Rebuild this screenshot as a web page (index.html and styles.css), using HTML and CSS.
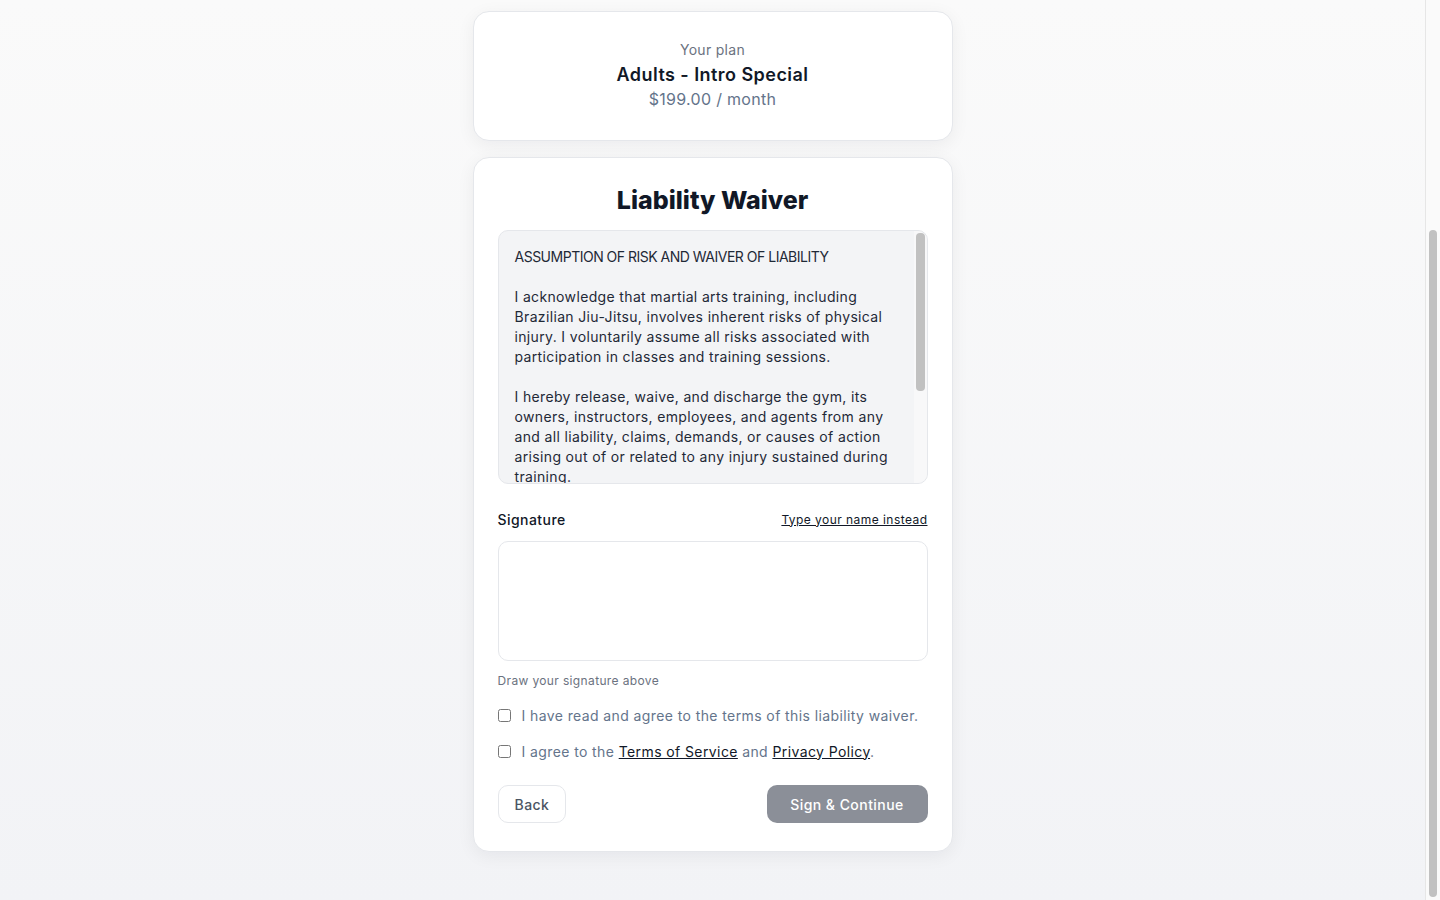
FILE: index.html
```html
<!DOCTYPE html>
<html lang="en">
<head>
    <meta charset="UTF-8">
    <meta name="viewport" content="width=device-width, initial-scale=1.0">
    <title>Liability Waiver</title>
    <link rel="stylesheet" href="styles.css">
</head>
<body>

<div class="page">
    <main class="checkout">
        <section class="card plan-card">
            <p class="plan-label">Your plan</p>
            <p class="plan-name">Adults - Intro Special</p>
            <p class="plan-price">$199.00 / month</p>
        </section>

        <section class="card waiver-card">
            <h1>Liability Waiver</h1>

            <div class="waiver-box">
                <div class="waiver-text"><span class="waiver-caps">ASSUMPTION OF RISK AND WAIVER OF LIABILITY</span>

I acknowledge that martial arts training, including Brazilian Jiu-Jitsu, involves inherent risks of physical injury. I voluntarily assume all risks associated with participation in classes and training sessions.

I hereby release, waive, and discharge the gym, its owners, instructors, employees, and agents from any and all liability, claims, demands, or causes of action arising out of or related to any injury sustained during training.

I certify that I am in good physical health and have no medical condition that would prevent my safe participation.</div>
                <div class="box-scroll"><div class="box-thumb"></div></div>
            </div>

            <div class="sig-head">
                <span class="sig-label">Signature</span>
                <a href="#" class="sig-switch">Type your name instead</a>
            </div>
            <div class="sig-pad"></div>
            <p class="hint">Draw your signature above</p>

            <label class="check">
                <input type="checkbox">
                <span>I have read and agree to the terms of this liability waiver.</span>
            </label>
            <label class="check">
                <input type="checkbox">
                <span>I agree to the <a href="#">Terms of Service</a> and <a href="#">Privacy Policy</a>.</span>
            </label>

            <div class="actions">
                <button class="btn btn-back">Back</button>
                <button class="btn btn-primary" disabled>Sign &amp; Continue</button>
            </div>
        </section>
    </main>

    <!-- window scrollbar, page is scrolled near the bottom -->
    <aside class="page-scroll">
        <div class="page-thumb"></div>
    </aside>
</div>

</body>
</html>
```

FILE: styles.css
```css
* {
    box-sizing: border-box;
}
body {
    margin: 0;
    height: 900px;
    overflow: hidden;
    font-family: Inter, "Open Sans", sans-serif;
    letter-spacing: 0.4px;
    color: #111827;
    background: linear-gradient(180deg, #fafafa 0%, #f2f3f6 100%);
}
p {
    margin: 0;
}
.page {
    display: flex;
    height: 900px;
}
.checkout {
    flex: 1;
    display: flex;
    flex-direction: column;
    align-items: center;
    gap: 16px;
    padding-top: 11px;
}
.card {
    width: 480px;
    background-color: #fff;
    border: 1px solid #e5e7eb;
    border-radius: 16px;
    box-shadow: 0 4px 18px rgba(17, 24, 39, 0.06);
}

/* plan summary */
.plan-card {
    padding: 25px 24px 28px;
    text-align: center;
}
.plan-label {
    font-size: 14px;
    line-height: 25px;
    letter-spacing: 0.3px;
    color: #6b7280;
}
.plan-name {
    font-size: 18px;
    line-height: 25px;
    font-weight: 600;
    letter-spacing: 0.45px;
    color: #111827;
}
.plan-price {
    font-size: 16px;
    line-height: 25px;
    letter-spacing: 0.3px;
    color: #64748b;
}

/* waiver */
.waiver-card {
    padding: 26px 24px 28px;
}
.waiver-card h1 {
    margin: 0 0 14px;
    font-size: 25px;
    line-height: 32px;
    font-weight: 800;
    letter-spacing: 0;
    text-align: center;
    color: #111827;
}
.waiver-box {
    display: flex;
    height: 254px;
    overflow: hidden;
    background-color: #f3f4f6;
    border: 1px solid #e5e7eb;
    border-radius: 10px;
}
.waiver-text {
    flex: 1;
    padding: 16px 10px 0 16px;
    font-size: 14px;
    line-height: 20px;
    letter-spacing: 0.35px;
    color: #1f2937;
    white-space: pre-line;
}
.waiver-caps {
    letter-spacing: -0.5px;
}
.box-scroll {
    width: 13px;
    padding: 2px 2px 0 2px;
    background-color: #f8f8f9;
}
.box-thumb {
    height: 158px;
    border-radius: 4px;
    background-color: #c1c1c1;
}

.sig-head {
    display: flex;
    justify-content: space-between;
    align-items: center;
    margin-top: 24px;
    height: 22px;
}
.sig-label {
    font-size: 14px;
    font-weight: 500;
    letter-spacing: 0.45px;
    color: #111827;
}
.sig-switch {
    font-size: 12px;
    letter-spacing: 0.45px;
    color: #111827;
    text-decoration: underline;
}
.sig-pad {
    height: 120px;
    margin-top: 11px;
    border: 1px solid #e5e7eb;
    border-radius: 10px;
    background-color: #fff;
}
.hint {
    margin-top: 11px;
    font-size: 12px;
    line-height: 18px;
    letter-spacing: 0.36px;
    color: #6b7280;
}

.check {
    display: flex;
    align-items: center;
    gap: 11px;
    margin-top: 14px;
    height: 22px;
    font-size: 14px;
    letter-spacing: 0.4px;
    color: #64748b;
}
.check + .check {
    margin-top: 14px;
}
.check input {
    width: 13px;
    height: 13px;
    margin: 0;
}
.check a {
    color: #111827;
    text-decoration: underline;
}

.actions {
    display: flex;
    justify-content: space-between;
    margin-top: 23px;
}
.btn {
    height: 38px;
    padding: 0 16px;
    border-radius: 10px;
    font-family: inherit;
    font-size: 14px;
    font-weight: 500;
    letter-spacing: 0.45px;
}
.btn-back {
    background-color: #fff;
    border: 1px solid #e5e7eb;
    color: #4b5563;
}
.btn-primary {
    width: 161px;
    background-color: #8b8f98;
    border: none;
    color: #fff;
}

/* window scrollbar */
.page-scroll {
    width: 15px;
    background-color: #fafafa;
    border-left: 1px solid #e6e6e6;
    padding: 230px 3px 3px 3px;
}
.page-thumb {
    height: 667px;
    border-radius: 4px;
    background-color: #c1c1c1;
}
```
